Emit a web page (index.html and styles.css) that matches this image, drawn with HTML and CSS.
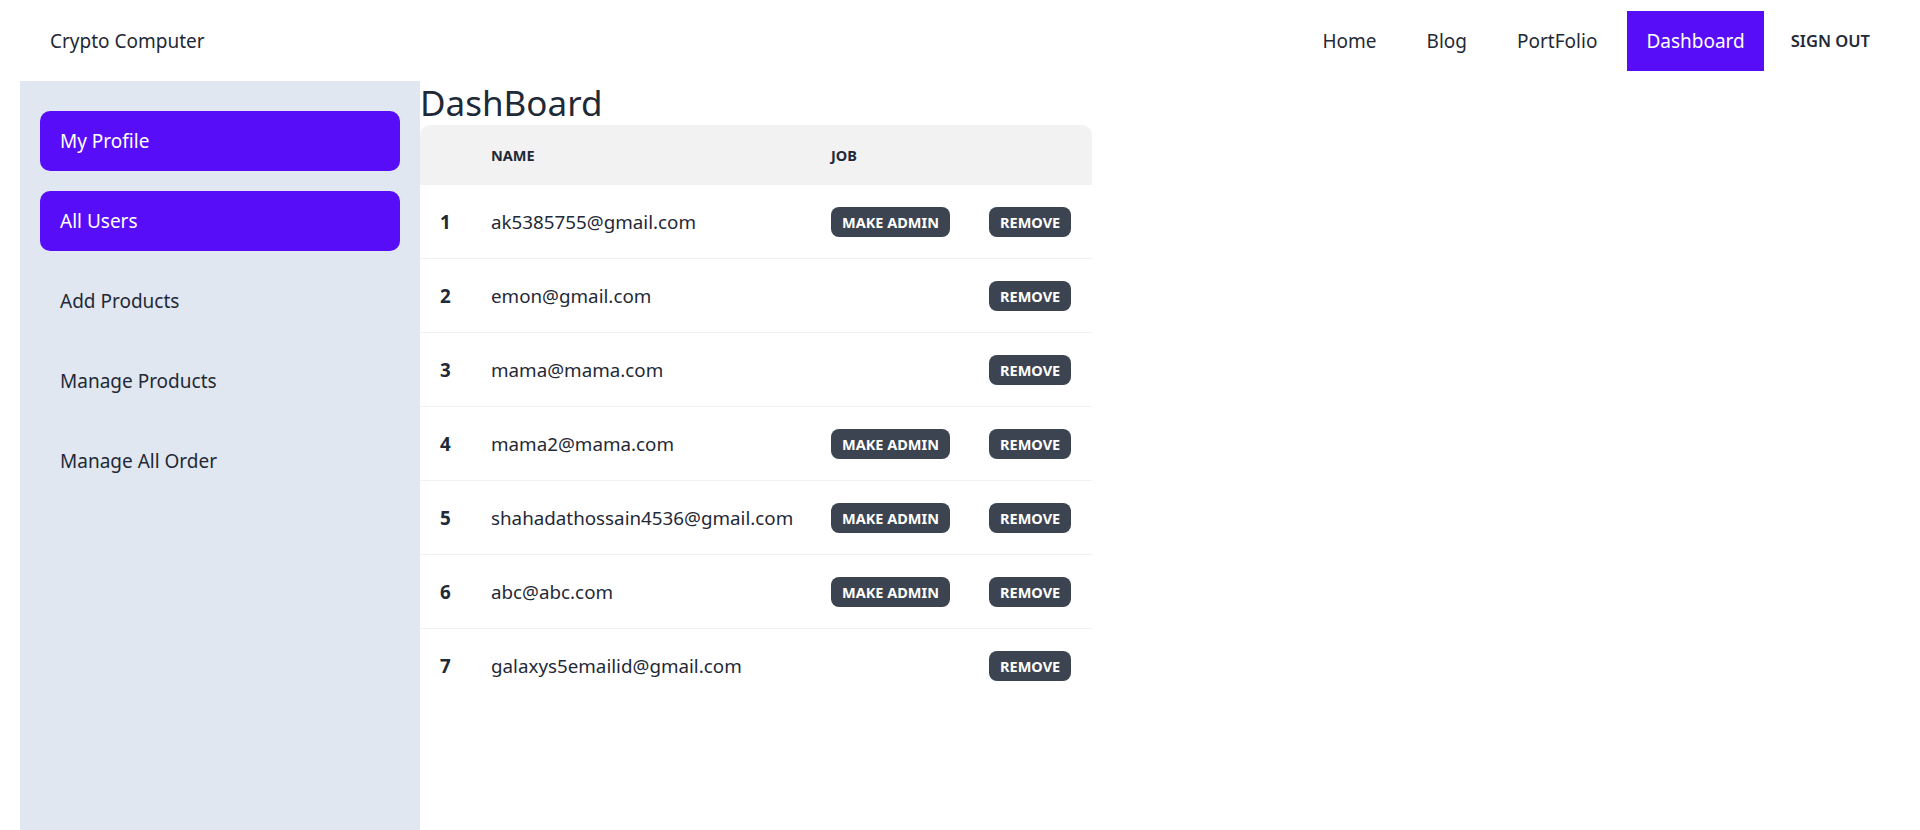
FILE: index.html
```html
<!DOCTYPE html>
<html lang="en">
<head>
<meta charset="utf-8">
<title>Crypto Computer - Dashboard</title>
<link rel="stylesheet" href="styles.css">
</head>
<body>
<header class="navbar">
  <a class="brand" href="#">Crypto Computer</a>
  <nav class="menu">
    <a class="menu-link" href="#">Home</a>
    <a class="menu-link" href="#">Blog</a>
    <a class="menu-link" href="#">PortFolio</a>
    <a class="menu-link active" href="#">Dashboard</a>
    <a class="signout" href="#">SIGN OUT</a>
  </nav>
</header>
<div class="drawer">
  <aside class="sidebar">
    <a class="side-link active" href="#">My Profile</a>
    <a class="side-link active" href="#">All Users</a>
    <a class="side-link" href="#">Add Products</a>
    <a class="side-link" href="#">Manage Products</a>
    <a class="side-link" href="#">Manage All Order</a>
  </aside>
  <main class="content">
    <h1 class="title">DashBoard</h1>
    <table class="table">
      <thead>
        <tr><th class="c-num"></th><th class="c-name">Name</th><th class="c-job">Job</th><th class="c-rm"></th></tr>
      </thead>
      <tbody>
        <tr><th>1</th><td>ak5385755@gmail.com</td><td><button class="btn">Make Admin</button></td><td><button class="btn">Remove</button></td></tr>
        <tr><th>2</th><td>emon@gmail.com</td><td></td><td><button class="btn">Remove</button></td></tr>
        <tr><th>3</th><td>mama@mama.com</td><td></td><td><button class="btn">Remove</button></td></tr>
        <tr><th>4</th><td>mama2@mama.com</td><td><button class="btn">Make Admin</button></td><td><button class="btn">Remove</button></td></tr>
        <tr><th>5</th><td>shahadathossain4536@gmail.com</td><td><button class="btn">Make Admin</button></td><td><button class="btn">Remove</button></td></tr>
        <tr><th>6</th><td>abc@abc.com</td><td><button class="btn">Make Admin</button></td><td><button class="btn">Remove</button></td></tr>
        <tr><th>7</th><td>galaxys5emailid@gmail.com</td><td></td><td><button class="btn">Remove</button></td></tr>
      </tbody>
    </table>
  </main>
</div>
</body>
</html>
```
FILE: styles.css
```css
* { box-sizing: border-box; }
html, body { margin: 0; padding: 0; }
body {
  font-family: "Noto Sans", "Open Sans", sans-serif;
  color: #1f2937;
  background: #ffffff;
  height: 830px;
  overflow: hidden;
}
a { text-decoration: none; color: inherit; }

.navbar {
  display: flex;
  align-items: center;
  justify-content: space-between;
  height: 81px;
  padding: 10px 30px 10px 30px;
}
.brand {
  font-size: 19px;
  padding: 0 20px;
  line-height: 60px;
  color: #1f2937;
}
.menu {
  display: flex;
  align-items: center;
  gap: 10px;
}
.menu-link {
  font-size: 19px;
  line-height: 60px;
  height: 60px;
  padding: 0 20px;
  color: #1f2937;
}
.menu-link.active {
  background: #570df8;
  color: #ffffff;
  padding: 0 19px 0 19px;
}
.signout {
  font-size: 16.5px;
  font-weight: 600;
  line-height: 60px;
  padding: 0 20px 0 17px;
  color: #1f2937;
}

.drawer {
  display: flex;
  padding-left: 20px;
}
.sidebar {
  width: 400px;
  min-height: 749px;
  background: #e1e7f0;
  padding: 30px 20px 20px;
  display: flex;
  flex-direction: column;
  gap: 20px;
}
.side-link {
  display: block;
  height: 60px;
  line-height: 60px;
  padding: 0 20px;
  font-size: 19px;
  border-radius: 10px;
  color: #1f2937;
}
.side-link.active {
  background: #570df8;
  color: #ffffff;
}

.content {
  display: flex;
  flex-direction: column;
}
.title {
  margin: 0;
  font-weight: 400;
  font-size: 35px;
  line-height: 44px;
  color: #1f2937;
}
.table {
  border-collapse: separate;
  border-spacing: 0;
  width: 672px;
  table-layout: fixed;
}
.c-num { width: 51px; }
.c-name { width: 340px; }
.c-job { width: 158px; }
.c-rm { width: 123px; }
.table thead th {
  background: #f2f2f2;
  height: 60px;
  padding: 0 20px;
  text-align: left;
  font-size: 14.5px;
  font-weight: 700;
  text-transform: uppercase;
  color: #1f2937;
}
.table thead th:first-child { border-top-left-radius: 10px; }
.table thead th:last-child { border-top-right-radius: 10px; }
.table tbody th,
.table tbody td {
  height: 74px;
  padding: 0 20px;
  text-align: left;
  border-bottom: 1px solid #f2f2f2;
  font-size: 18.8px;
  white-space: nowrap;
}
.table tbody th {
  font-weight: 700;
}
.table tbody tr:last-child th,
.table tbody tr:last-child td { border-bottom: none; }
.table tbody td { font-weight: 400; color: #1f2937; }
.btn {
  font-family: inherit;
  background: #3d4451;
  color: #ffffff;
  border: none;
  border-radius: 8px;
  height: 30px;
  padding: 0 11px;
  font-size: 14.5px;
  font-weight: 700;
  text-transform: uppercase;
  cursor: pointer;
}
```
